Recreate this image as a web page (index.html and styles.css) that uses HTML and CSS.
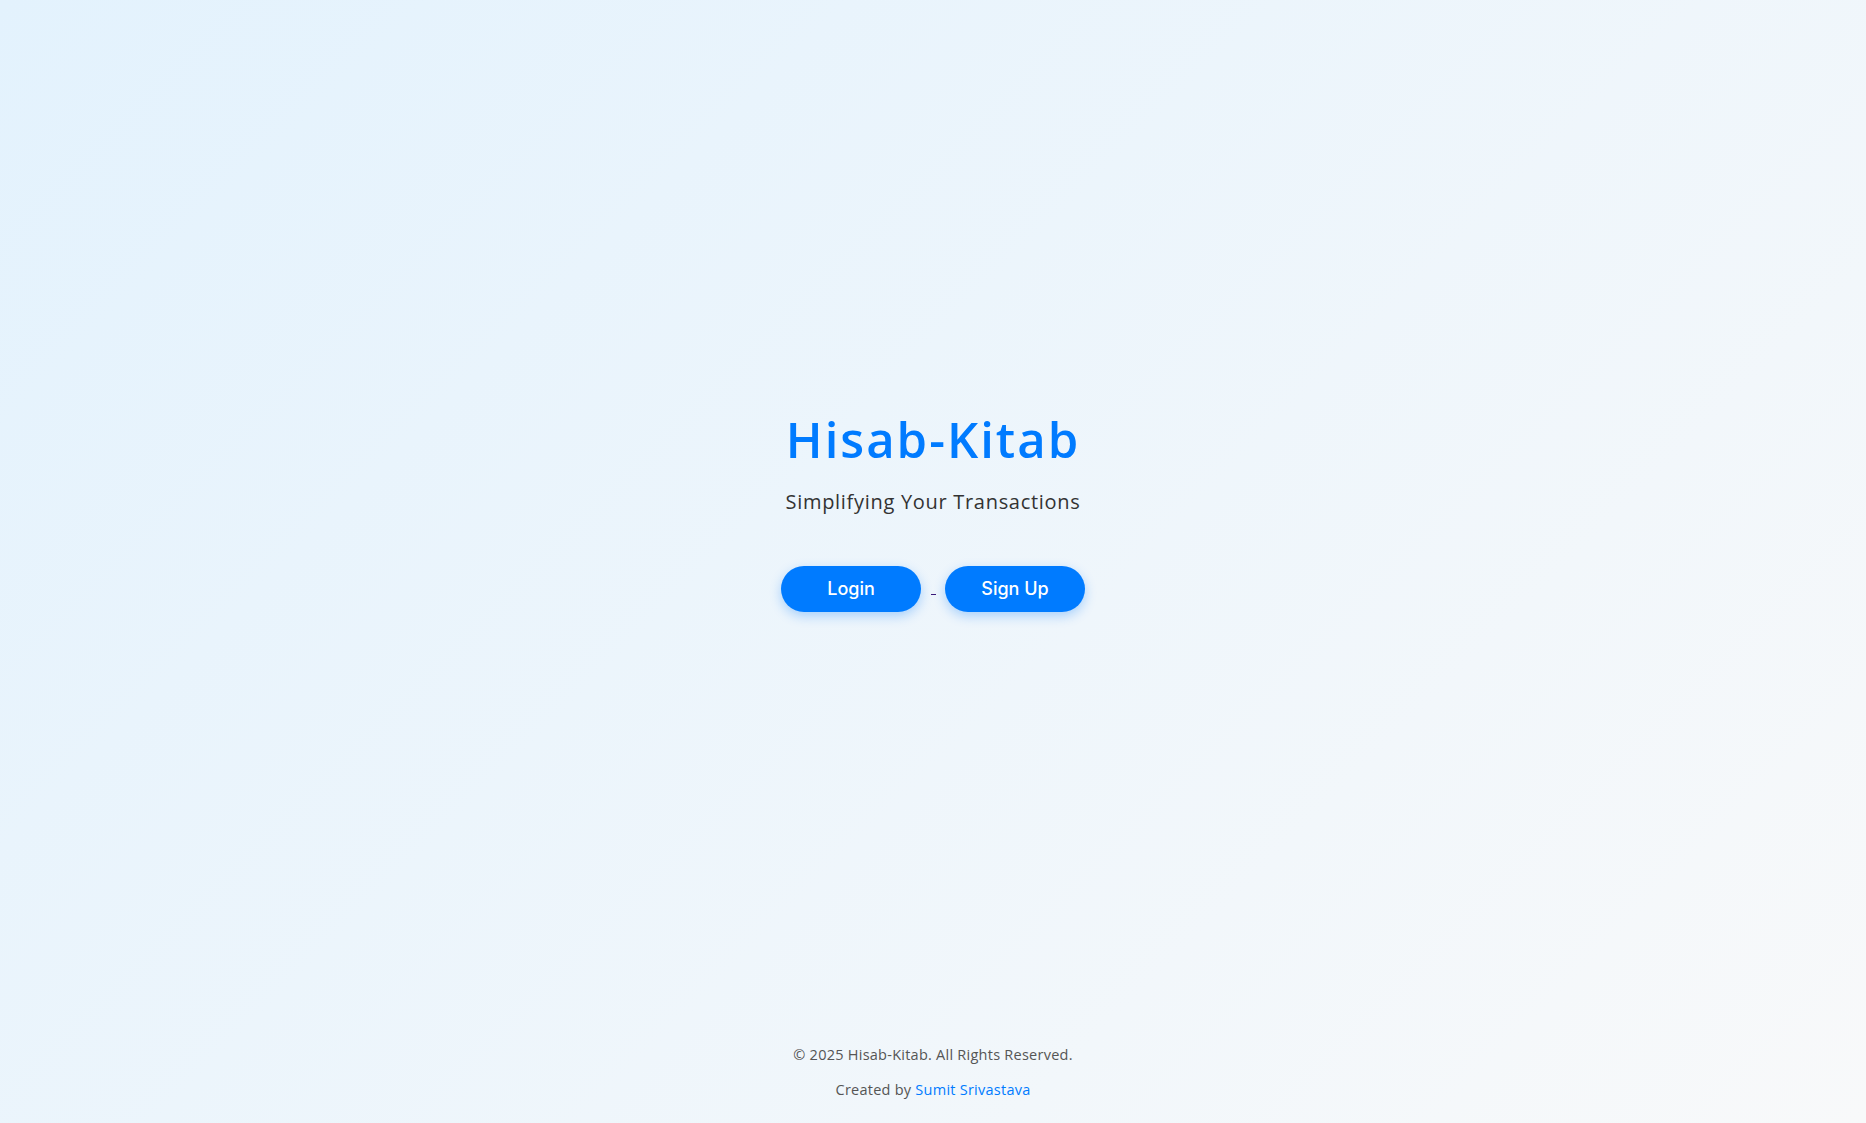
FILE: index.html
```html
<!DOCTYPE html>
<html lang="en">
<head>
<meta charset="utf-8">
<title>Hisab-Kitab</title>
<link rel="stylesheet" href="styles.css">
</head>
<body>
<main class="hero">
  <h1 class="title">Hisab-Kitab</h1>
  <p class="tagline">Simplifying Your Transactions</p>
  <div class="actions">
    <a class="btn" href="#login">Login</a><span class="sep"> </span><a class="btn" href="#signup">Sign Up</a>
  </div>
</main>
<footer class="footer">
  <p class="copy">© 2025 Hisab-Kitab. All Rights Reserved.</p>
  <p class="credit">Created by <a class="author" href="#author">Sumit Srivastava</a></p>
</footer>
</body>
</html>
```
FILE: styles.css
```css
* { box-sizing: border-box; }
html, body { height: 100%; }
body {
  margin: 0;
  min-height: 100vh;
  display: flex;
  flex-direction: column;
  font-family: "Open Sans", "DejaVu Sans", sans-serif;
  background: linear-gradient(135deg, #e3f2fd 0%, #f8f9fa 100%);
  color: #333;
}
.hero {
  flex: 1;
  display: flex;
  flex-direction: column;
  align-items: center;
  justify-content: center;
  padding-bottom: 22px;
}
.title {
  margin: 0;
  font-size: 49px;
  font-weight: 600;
  letter-spacing: 2px;
  color: #007bff;
  line-height: 1.2;
}
.tagline {
  margin: 19px 0 0;
  font-size: 20px;
  letter-spacing: 0.7px;
  color: #333;
}
.actions {
  margin-top: 51px;
  display: flex;
  align-items: center;
}
.btn {
  display: flex;
  align-items: center;
  justify-content: center;
  width: 140px;
  height: 46px;
  border-radius: 23px;
  background: #007bff;
  color: #fff;
  text-decoration: none;
  font-family: Inter, "Liberation Sans", sans-serif;
  font-size: 18px;
  font-weight: 500;
  box-shadow: 0 4px 12px rgba(0, 123, 255, 0.3);
}
.sep {
  width: 24px;
  display: flex;
  justify-content: center;
  align-self: center;
  margin-top: 12px;
}
.sep::before {
  content: "";
  width: 5px;
  height: 1px;
  background: #3a1a7a;
}
.footer {
  text-align: center;
  padding: 0 0 23px;
  font-size: 14.5px;
  letter-spacing: 0.25px;
  color: #555;
}
.copy { margin: 0 0 14px; line-height: 21px; }
.credit { margin: 0; line-height: 21px; }
.author { color: #007bff; text-decoration: none; }
```
